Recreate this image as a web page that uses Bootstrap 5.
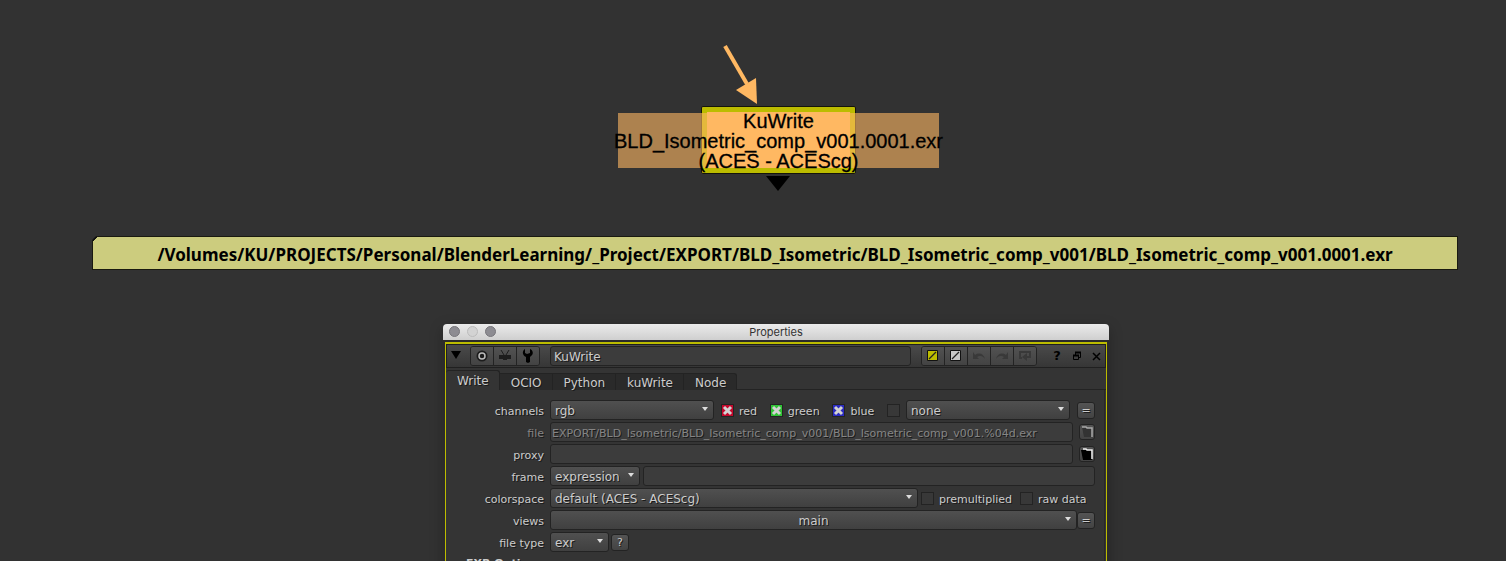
<!DOCTYPE html>
<html lang="en">
<head>
<meta charset="utf-8">
<meta name="viewport" content="width=device-width, initial-scale=1">
<title>KuWrite</title>
<link href="https://cdn.jsdelivr.net/npm/bootstrap@5.3.0/dist/css/bootstrap.min.css" rel="stylesheet">
<style>
body{background:#323232;font-family:"DejaVu Sans",sans-serif}
.graph{padding:106px 48px 0 92px}
/* node */
.node-row{padding-left:7px}
.node-box{width:155px;height:68px;border:1px solid #15150a;border-radius:2px;background:#ffb862;box-shadow:inset 0 0 0 5px #bcbc00;color:#000;font:20px/20px "Liberation Sans",Arial,sans-serif;padding-top:4px}
.node-box::before{content:"";position:absolute;inset:6px -84px 5px;background:rgba(255,184,98,.6)}
.node-box span{position:relative;white-space:nowrap;-webkit-text-stroke:.3px #000}
.node-pipe{position:absolute;left:21px;top:-62px}
.node-out{position:absolute;left:64px;top:69px}
/* sticky note */
.note{margin-top:62px;height:34px;padding-top:1px;border:1px solid #1a1a10;background:linear-gradient(135deg,#111 3px,#cccc7e 3px);clip-path:polygon(4px 0,100% 0,100% 100%,0 100%,0 4px);color:#000;font:bold 17px/34px "Noto Sans",sans-serif}
/* properties window */
.win-row{padding-left:2px;margin-top:54px}
.win{width:666px;background:#2b2b2b;color:#ccc;font-size:11px;line-height:14px;border-radius:4px 4px 0 0;box-shadow:0 4px 14px rgba(0,0,0,.25)}
.titlebar{height:16px;background:linear-gradient(#ebebeb,#cfcfcf);border-radius:4px 4px 0 0;color:#333;font:11px/16px Inter,sans-serif}
.dots{position:absolute;left:6px;top:2px;gap:7px}
.dots i{width:11px;height:11px;border-radius:50%;background:#8d8c92;border:1px solid #77767b}
.dots i.off{background:#d3d3d3;border-color:#bcbcbc}
.panel{margin:2px 2px 0;border:1px solid #bcbc00;border-top-width:2px;border-bottom:0;background:#343434;min-height:300px;text-shadow:1px 1px #1a1a1a}
.toolrow{height:24px;border:1px solid #202020;background:linear-gradient(#4a4a4a,#363636);padding:0 0 0 4px}
.tgroup{border:1px solid #232323;border-radius:3px;overflow:hidden;height:20px}
.tgroup button{width:23px;background:linear-gradient(#525252,#434343)}
.tgroup button:last-child{width:22px}
.plain,.tgroup button{padding:0;border:0 solid #232323;display:flex;align-items:center;justify-content:center}
.tgroup button:not(:last-child){border-right-width:1px}
.plain{background:none;width:20px}
.box{height:20px;border:1px solid #232323;border-radius:3px;background:#3c3c3c;color:#ccc;font-size:12px;line-height:14px;padding:2px 3px 0;text-shadow:inherit;min-width:0}
.box:disabled{color:#858585;opacity:1;padding:2px 0 0 1px;font-size:11px}
select.box{appearance:none;background:url("data:image/svg+xml,%3Csvg xmlns='http://www.w3.org/2000/svg' width='6' height='4'%3E%3Cpath d='M0 0h6L3 4z' fill='%23ddd'/%3E%3C/svg%3E") no-repeat right 5px top 6px,linear-gradient(#505050,#404040);padding:2px 4px 0}
/* tabs */
.ptabs{height:20px;margin-top:2px}
.ptabs button{height:17px;margin-top:3px;padding:2px 10px 0 11px;border:1px solid #232323;border-left-width:0;border-bottom:0;background:#2a2a2a;color:#ccc;text-shadow:inherit;font-size:12px;line-height:13px}
.ptabs button:last-of-type{border-radius:0 3px 0 0}
.ptabs button.active{height:20px;margin-top:0;background:#343434;border-radius:3px 3px 0 0}
.tabline{border-bottom:1px solid #232323}
/* knobs */
.knobs{padding:10px 9px 0 0;border-right:1px solid #292929;display:grid;row-gap:2px;margin-right:1px}
.knob{display:flex;align-items:center;height:20px}
.knob>.cap{width:98px;margin-right:6px;text-align:right;padding-top:3px;flex:none}
.tick{appearance:none;flex:none;width:13px;height:13px;border:1px solid #232323;background:#383838;margin:0}
.tick:checked{background:url("data:image/svg+xml,%3Csvg xmlns='http://www.w3.org/2000/svg' viewBox='0 0 11 11'%3E%3Cpath d='M2 2l7 7M9 2l-7 7' stroke='%23d2d2d2' stroke-width='3'/%3E%3C/svg%3E") center/11px,var(--chan)}
.ticklabel{padding-top:3px;margin-left:5px;white-space:nowrap}
.mini{flex:none;width:18px;height:17px;padding:0;border:1px solid #232323;border-radius:3px;background:linear-gradient(#545454,#434343);color:#ccc;text-shadow:inherit;line-height:15px}
.filebtn{width:16px;height:16px;display:flex}
.sect{padding:3px 0 0 20px;font-weight:bold}
</style>
<script src="https://cdn.jsdelivr.net/npm/bootstrap@5.3.0/dist/js/bootstrap.bundle.min.js"></script>
</head>
<body>
<main class="graph vh-100 overflow-hidden">
  <div class="node-row d-flex justify-content-center">
    <div class="node-box position-relative d-flex flex-column align-items-center">
      <span>KuWrite</span><span>BLD_Isometric_comp_v001.0001.exr</span><span>(ACES - ACEScg)</span>
      <svg class="node-pipe" width="36" height="60"><path d="M2 1l22 38" stroke="#ffb862" stroke-width="4"/><path d="M34 59L13 45 33 33z" fill="#ffb862"/></svg>
      <svg class="node-out" width="24" height="15"><path d="M0 0h24L12 15z"/></svg>
    </div>
  </div>
  <div class="note text-center text-nowrap">/Volumes/KU/PROJECTS/Personal/BlenderLearning/_Project/EXPORT/BLD_Isometric/BLD_Isometric_comp_v001/BLD_Isometric_comp_v001.0001.exr</div>

  <div class="win-row d-flex justify-content-center">
    <section class="win">
      <div class="titlebar position-relative text-center"><div class="dots d-flex"><i></i><i class="off"></i><i></i></div>Properties</div>
      <div class="panel">
        <div class="toolrow d-flex align-items-center">
          <svg width="11" height="10" class="me-2"><path d="M0 0h10L5 8z"/></svg>
          <div class="tgroup d-flex">
            <button aria-label="Centre"><svg width="12" height="12"><circle cx="6" cy="6" r="5.5" fill="#1c1c1c"/><circle cx="6" cy="6" r="3" fill="none" stroke="#bbb" stroke-width="1.5"/></svg></button>
            <button aria-label="Input"><svg width="14" height="12"><path d="M1 5h12v4H9v1H5V9H1z" fill="#1d1d1d"/><path d="M3 0l3 5M11 0L8 5" stroke="#1d1d1d"/></svg></button>
            <button aria-label="Tools"><svg width="12" height="14"><path d="M3 0v4l2 1 3-1V0c3 1 4 5 1 7l-1 1v5l-2 1-2-1V8C0 6 0 2 3 0z"/></svg></button>
          </div>
          <input class="box flex-grow-1" style="margin:0 10px" aria-label="Node name" value="KuWrite">
          <div class="tgroup d-flex">
            <button aria-label="Node colour"><svg width="12" height="12"><path d="M.5.5h10v10H.5z" fill="#bcbc00" stroke="#111"/><path d="M2 9l7-7" stroke="#222" stroke-width="1.3"/></svg></button>
            <button aria-label="Viewer colour"><svg width="12" height="12"><path d="M.5.5h10v10H.5z" fill="#c8c8c8" stroke="#111"/><path d="M2 9l7-7" stroke="#222" stroke-width="1.3"/></svg></button>
            <button aria-label="Undo"><svg width="14" height="10"><path d="M1 1v7h6L5 6c3-2 6-1 8 2-1-5-6-7-10-4z" fill="#393939"/></svg></button>
            <button aria-label="Redo"><svg width="14" height="10"><path d="M13 1v7H7l2-2C6 4 3 5 1 8c1-5 6-7 10-4z" fill="#393939"/></svg></button>
            <button aria-label="Revert"><svg width="14" height="12"><path d="M4 8H2V2h10v5H8" fill="none" stroke="#393939" stroke-width="2"/><path d="M9 3v8L4 7z" fill="#393939"/></svg></button>
          </div>
          <button class="plain fw-bold text-black" style="margin-left:10px;font-size:13px" aria-label="Help">?</button>
          <button class="plain" aria-label="Float"><svg width="10" height="10"><path d="M3.500 4V1.500h5v5H6M1.500 4.500h5v4h-5z" fill="none" stroke="#000"/><path d="M3 1.500h6M1 4.500h6" stroke="#000" stroke-width="2"/></svg></button>
          <button class="plain" style="width:18px" aria-label="Close"><svg width="9" height="9"><path d="M1 1l7 7M8 1L1 8" stroke="#000" stroke-width="1.500"/></svg></button>
        </div>
        <div class="ptabs d-flex">
          <button class="active">Write</button><div class="d-flex flex-grow-1 tabline"><button>OCIO</button><button>Python</button><button>kuWrite</button><button>Node</button></div>
        </div>
        <form class="knobs">
          <div class="knob"><label class="cap" for="ch">channels</label>
            <select id="ch" class="box" style="width:164px"><option>rgb</option></select>
            <input class="tick" style="--chan:#c4082c;margin-left:7px" type="checkbox" id="r" checked><label class="ticklabel" for="r">red</label>
            <input class="tick ms-auto" style="--chan:#2fc335" type="checkbox" id="g" checked><label class="ticklabel" for="g">green</label>
            <input class="tick ms-auto" style="--chan:#2b2bc0" type="checkbox" id="b" checked><label class="ticklabel" for="b">blue</label>
            <input class="tick ms-auto" type="checkbox" id="n" aria-label="Fourth channel">
            <select class="box" style="width:164px;margin:0 7px 0 6px" aria-label="Mask"><option>none</option></select>
            <button type="button" class="mini">=</button></div>
          <div class="knob"><label class="cap" style="color:#858585" for="f">file</label>
            <input id="f" class="box flex-grow-1" disabled value="EXPORT/BLD_Isometric/BLD_Isometric_comp_v001/BLD_Isometric_comp_v001.%04d.exr">
            <button type="button" class="mini filebtn" style="margin-left:6px" aria-label="Browse file"><svg width="14" height="14"><path d="M2 2h4l1 1h5v9H4z" fill="#333"/><path d="M2 2h4l1 1h5v9" fill="none" stroke="#aaa" stroke-width="1.500"/></svg></button></div>
          <div class="knob"><label class="cap" for="p">proxy</label>
            <input id="p" class="box flex-grow-1">
            <button type="button" class="mini filebtn" style="margin-left:6px" aria-label="Browse proxy"><svg width="14" height="14"><path d="M1 3h10l1 10H3z"/><path d="M3 2h3l1 1h5v9" fill="none" stroke="#eee" stroke-width="1.500"/></svg></button></div>
          <div class="knob"><label class="cap" for="fr">frame</label>
            <select id="fr" class="box" style="width:90px"><option>expression</option></select>
            <input class="box flex-grow-1" style="margin-left:3px" aria-label="Frame expression"></div>
          <div class="knob"><label class="cap" for="cs">colorspace</label>
            <select id="cs" class="box" style="width:368px"><option>default (ACES - ACEScg)</option></select>
            <input class="tick" style="margin-left:3px" type="checkbox" id="pm"><label class="ticklabel" for="pm">premultiplied</label>
            <input class="tick" style="margin-left:8px" type="checkbox" id="rd"><label class="ticklabel" for="rd">raw data</label></div>
          <div class="knob"><label class="cap" for="v">views</label>
            <select id="v" class="box flex-grow-1 text-center"><option>main</option></select><button type="button" class="mini">=</button></div>
          <div class="knob"><label class="cap" for="ft">file type</label>
            <select id="ft" class="box" style="width:59px"><option>exr</option></select>
            <button type="button" class="mini" style="margin-left:2px">?</button></div>
          <div class="sect">EXR Options</div>
        </form>
      </div>
    </section>
  </div>
</main>
</body>
</html>
